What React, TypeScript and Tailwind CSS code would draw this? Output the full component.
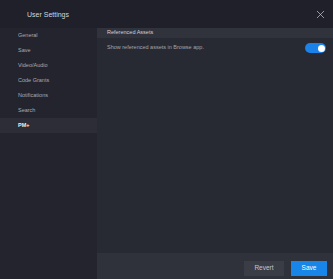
import { X } from 'lucide-react';

const navItems = ['General', 'Save', 'Video/Audio', 'Code Grants', 'Notifications', 'Search', 'PM+'];

const App = () => {
  const active = 'PM+';

  return (
    <div className="w-[333px] h-[279px] flex flex-col bg-[#1f2029] font-['Liberation_Sans',Arial,sans-serif] overflow-hidden">
      {/* Header */}
      <div className="h-[28px] flex items-center justify-between pl-[27px] pr-[6px] shrink-0">
        <span className="text-[7px] text-[#d4d5da] leading-none">User Settings</span>
        <X size={13} strokeWidth={1.3} className="text-[#c9cad0]" />
      </div>

      <div className="flex flex-1 min-h-0">
        {/* Sidebar */}
        <div className="w-[97px] bg-[#23242d] flex flex-col shrink-0">
          {navItems.map((item) => (
            <div
              key={item}
              className={`h-[15px] flex items-center pl-[18px] text-[5.5px] leading-none ${
                item === active ? 'bg-[#2c2d37] text-[#eeeff2] font-semibold' : 'text-[#a9aab2]'
              }`}
            >
              {item}
            </div>
          ))}
        </div>

        {/* Main */}
        <div className="flex-1 flex flex-col bg-[#282a33]">
          <div className="h-[10px] bg-[#30323c] flex items-center pl-[10px] text-[5.5px] leading-none text-[#d0d1d6]">
            Referenced Assets
          </div>
          <div className="h-[20px] flex items-center justify-between pl-[10px] pr-[7px]">
            <span className="text-[5.5px] leading-none text-[#a3a4ac]">Show referenced assets in Browse app.</span>
            <div className="w-[21px] h-[10px] rounded-full bg-[#1a82e8] flex items-center justify-end pr-[1.5px]">
              <div className="w-[7px] h-[7px] rounded-full bg-white" />
            </div>
          </div>
          <div className="flex-1" />
          <div className="h-[26px] bg-[#30323b] flex items-start justify-end gap-[7px] pt-[8px] pr-[6px]">
            <button className="w-[40px] h-[15px] bg-[#3a3c46] text-[#c6c7cd] text-[6.5px] leading-none">
              Revert
            </button>
            <button className="w-[36px] h-[15px] bg-[#1786e8] text-white text-[6.5px] leading-none">
              Save
            </button>
          </div>
        </div>
      </div>
    </div>
  );
};

export default App;
